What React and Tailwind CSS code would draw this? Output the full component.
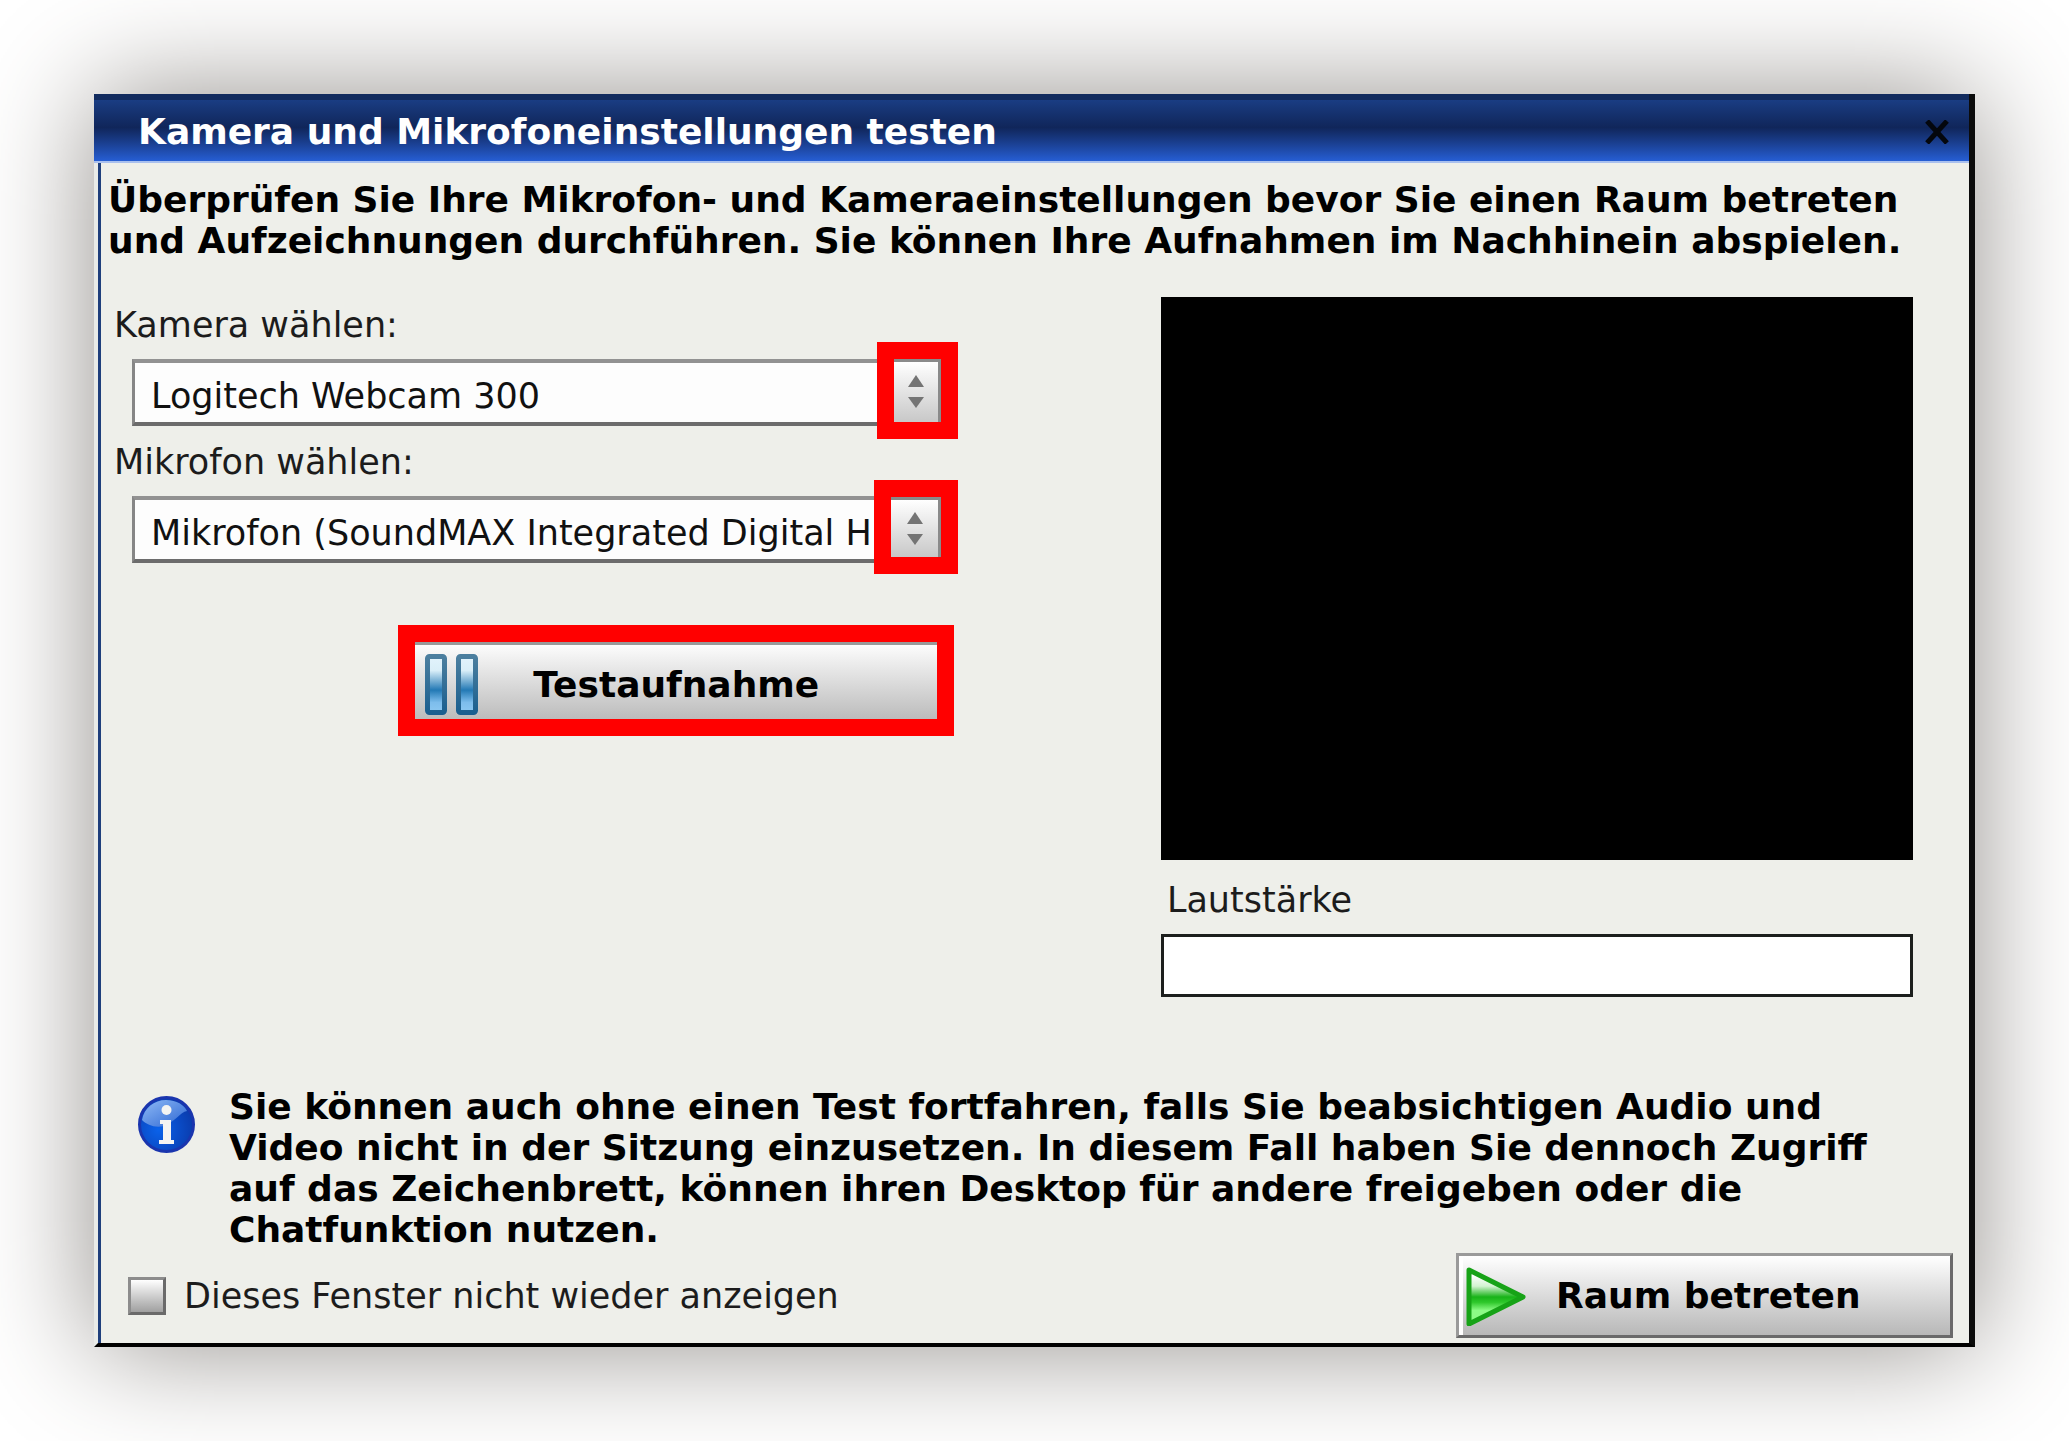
import { useState } from 'react'

function Spinner({ className }) {
  return (
    <span aria-hidden="true" className={`pointer-events-none absolute flex items-center justify-center border-[17px] border-[#ff0000] ${className}`}>
      <span className="flex h-full w-full items-center justify-center border-t-3 border-r-3 border-[#8a8a8a] bg-linear-to-b from-white to-[#c8c8c8]">
        <svg className="h-[34px] w-4" viewBox="0 0 16 34" fill="#747474">
          <path d="M8 0l8 12H0z"/>
          <path d="M0 22h16L8 33z"/>
        </svg>
      </span>
    </span>
  )
}

function DeviceSelect({ id, label, options, spinner }) {
  return (
    <div className="flex flex-col gap-3.5">
      <label htmlFor={id} className="ml-1.5 leading-10">{label}</label>
      <div className="relative ml-6">
        <select
          id={id}
          className="block h-[67px] w-full appearance-none rounded-none border-t-4 border-b-4 border-l-3 border-t-[#929292] border-b-[#6c6c6c] border-l-[#868686] bg-[#fdfdfd] pt-1.5 pr-10 pl-4 text-[35px] leading-10 text-[#111] outline-none"
        >
          {options.map(o => <option key={o}>{o}</option>)}
        </select>
        <Spinner className={spinner}/>
      </div>
    </div>
  )
}

function PauseIcon() {
  return (
    <svg className="h-[61px] w-[54px] shrink-0" viewBox="0 0 54 61" aria-hidden="true">
      <defs>
        <linearGradient id="pause" x1="0" y1="0" x2="0" y2="1">
          <stop offset="0" stopColor="#e2f3fc"/>
          <stop offset=".25" stopColor="#d9eef8"/>
          <stop offset=".6" stopColor="#2379b5"/>
          <stop offset=".82" stopColor="#7dbdec"/>
          <stop offset="1" stopColor="#8cc8f2"/>
        </linearGradient>
        <linearGradient id="pauseEdge" x1="0" y1="0" x2="0" y2="1">
          <stop offset="0" stopColor="#4c7f9f"/>
          <stop offset="1" stopColor="#1b5f8f"/>
        </linearGradient>
      </defs>
      <rect x="2.5" y="2.5" width="17" height="56" rx="2" fill="url(#pause)" stroke="url(#pauseEdge)" strokeWidth="5"/>
      <rect x="33.5" y="2.5" width="17" height="56" rx="2" fill="url(#pause)" stroke="url(#pauseEdge)" strokeWidth="5"/>
    </svg>
  )
}

function PlayIcon() {
  return (
    <svg className="h-[60px] w-[60px] shrink-0" viewBox="0 0 60 60" aria-hidden="true">
      <defs>
        <linearGradient id="play" x1="0" y1="0" x2="0" y2="1">
          <stop offset=".1" stopColor="#fff"/>
          <stop offset=".3" stopColor="#d3f3d1"/>
          <stop offset=".5" stopColor="#18b318"/>
          <stop offset=".6" stopColor="#2fc82c"/>
          <stop offset=".75" stopColor="#8dfb86"/>
        </linearGradient>
      </defs>
      <path d="M3 4L57 31 3 58z" fill="url(#play)" stroke="#17a317" strokeWidth="5" strokeLinejoin="round"/>
    </svg>
  )
}

function InfoIcon() {
  return (
    <svg className="mt-2.5 h-[57px] w-[57px] shrink-0" viewBox="0 0 57 57" aria-hidden="true">
      <defs>
        <radialGradient id="info" cx=".35" cy=".6" r=".65">
          <stop offset="0" stopColor="#0a62ea"/>
          <stop offset="1" stopColor="#0a3cae"/>
        </radialGradient>
        <linearGradient id="shine" x1="0" y1="0" x2="1" y2="1">
          <stop offset="0" stopColor="#8fbaf6"/>
          <stop offset="1" stopColor="#2c66d2"/>
        </linearGradient>
      </defs>
      <circle cx="28.5" cy="28.5" r="27" fill="url(#info)" stroke="#1a35ae" strokeWidth="3"/>
      <path d="M4 24C6 12 16 4 28 4c11 0 18 5 21 11-7 1-12 11-23 15-9 2-17-1-22-6z" fill="url(#shine)"/>
      <circle cx="28.500" cy="14" r="5" fill="#f4f4f2"/>
      <path d="M22 24h11v20h3v4H21v-4h4V28h-3z" fill="#f4f4f2"/>
    </svg>
  )
}

export default function App() {
  const [hide, setHide] = useState(false)

  return (
    <main className="min-h-screen bg-white p-[94px] font-['DejaVu_Sans',Verdana,sans-serif] text-[35px] text-[#1c1c1c]">
      <section className="border-r-6 border-b-4 border-l-4 border-r-[#0b0b0b] border-b-black border-l-[#e9ebe8] bg-[#eeefea] shadow-[0_0_110px_#938f8b]">
        <header className="-ml-1 flex h-[69px] items-center justify-between border-t-6 border-b-2 border-t-[#122b5e] border-b-[#a9c0ee] bg-linear-to-b from-[#1a3d83] via-[#10265a] via-45% to-[#265ed4] pr-5 pl-11">
          <h1 className="mt-0.5 text-[36px] leading-[41px] font-bold whitespace-nowrap text-white">Kamera und Mikrofoneinstellungen testen</h1>
          <button type="button" aria-label="Schließen" className="mt-0.5 text-[#04070d]">
            <svg className="h-6 w-6" viewBox="0 0 24 24" fill="none" stroke="currentColor" strokeWidth="5">
              <path d="M2 1l20 22M22 1L2 23"/>
            </svg>
          </button>
        </header>

        <div className="border-l-3 border-l-[#1f3f7c] pt-4 pr-4 pb-[5px] pl-[7px]">
          <p className="text-[36px] leading-[41px] font-bold text-black">
            Überprüfen Sie Ihre Mikrofon- und Kameraeinstellungen bevor Sie einen Raum betreten<br/>
            und Aufzeichnungen durchführen. Sie können Ihre Aufnahmen im Nachhinein abspielen.
          </p>

          <div className="mt-9 flex justify-between pr-10">
            <div className="flex w-[46%] flex-col gap-4 pt-2">
              <DeviceSelect
                id="kamera"
                label="Kamera wählen:"
                options={['Logitech Webcam 300']}
                spinner="-top-[17px] -right-5 h-[97px] w-[81px]"
              />
              <DeviceSelect
                id="mikrofon"
                label="Mikrofon wählen:"
                options={['Mikrofon (SoundMAX Integrated Digital H']}
                spinner="-top-4 -right-5 h-[94px] w-[84px]"
              />
              <button type="button" className="mt-[46px] -mr-4 flex h-[111px] w-[556px] items-center self-end border-[17px] border-[#ff0000] bg-linear-to-b from-white to-[#bcbcbc] pt-2 pl-2.5 text-[36px] font-bold text-black inset-shadow-[0_3px_0_#999]">
                <PauseIcon/>
                <span className="ml-[54px]">Testaufnahme</span>
              </button>
            </div>

            <div className="flex w-5/12 flex-col">
              <div className="h-[563px] bg-black"/>
              <label htmlFor="volume" className="mt-5 ml-1.5 leading-10">Lautstärke</label>
              <input id="volume" readOnly className="mt-3.5 h-[63px] border-3 border-[#1c1f1d] bg-white outline-none"/>
            </div>
          </div>

          <div className="mt-[89px] flex gap-[34px] pl-[30px]">
            <InfoIcon/>
            <p className="text-[36px] leading-[41px] font-bold text-black">
              Sie können auch ohne einen Test fortfahren, falls Sie beabsichtigen Audio und<br/>
              Video nicht in der Sitzung einzusetzen. In diesem Fall haben Sie dennoch Zugriff<br/>
              auf das Zeichenbrett, können ihren Desktop für andere freigeben oder die<br/>
              Chatfunktion nutzen.
            </p>
          </div>

          <div className="mt-[3px] flex items-center justify-between">
            <label className="flex items-center gap-[18px] pl-5 leading-10">
              <input
                type="checkbox"
                checked={hide}
                onChange={e => setHide(e.target.checked)}
                className="h-[38px] w-[38px] appearance-none border-3 border-t-[#8c8c8c] border-r-[#6a6a6a] border-b-[#6a6a6a] border-l-[#8c8c8c] bg-linear-to-b from-white to-[#a0a0a0] checked:bg-[#555]"
              />
              Dieses Fenster nicht wieder anzeigen
            </label>
            <button type="button" className="flex h-[85px] w-[497px] items-center border-3 border-t-[#9a9a9a] border-r-[#6a6a6a] border-b-[#6a6a6a] border-l-[#9a9a9a] bg-linear-to-b from-white to-[#b8b8b8] pl-[7px] text-[36px] font-bold text-black inset-shadow-[4px_0_0_#fff]">
              <PlayIcon/>
              <span className="ml-[30px]">Raum betreten</span>
            </button>
          </div>
        </div>
      </section>
    </main>
  )
}
